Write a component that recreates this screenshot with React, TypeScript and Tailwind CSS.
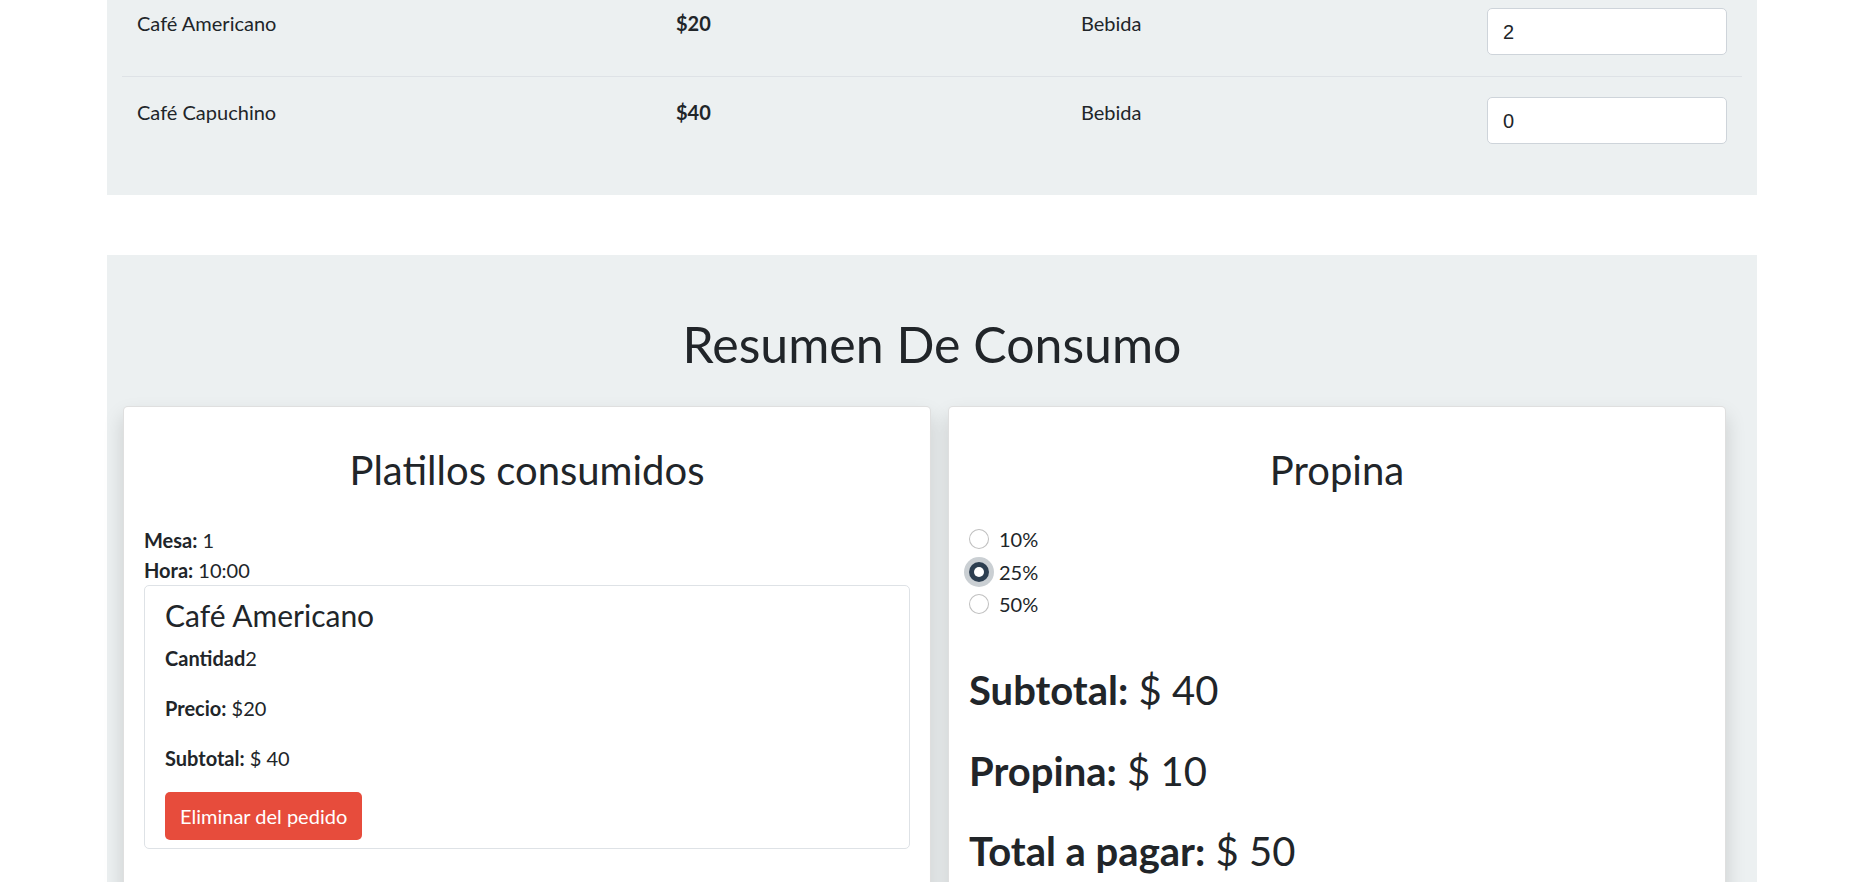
const productos = [
  { nombre: "Café Americano", precio: 20, tipo: "Bebida", cantidad: 2 },
  { nombre: "Café Capuchino", precio: 40, tipo: "Bebida", cantidad: 0 },
]

const propinas = [
  { label: "10%", checked: false },
  { label: "25%", checked: true },
  { label: "50%", checked: false },
]

const Radio = ({ checked }: { checked: boolean }) =>
  checked ? (
    <span className="mt-[5px] flex h-[20px] w-[20px] shrink-0 items-center justify-center rounded-full bg-[#2c3e50] shadow-[0_0_0_5px_rgba(44,62,80,0.25)]">
      <span className="h-[10px] w-[10px] rounded-full bg-white"></span>
    </span>
  ) : (
    <span className="mt-[5px] block h-[20px] w-[20px] shrink-0 rounded-full border border-[rgba(0,0,0,0.25)] bg-white"></span>
  )

export default function App() {
  return (
    <div className="min-h-screen bg-white font-['Lato',sans-serif] text-[20px] leading-[30px] text-[#212529] overflow-hidden">
      {/* Menu table */}
      <section className="ml-[107px] flex w-[1650px] flex-col bg-[#ecf0f1] px-[15px] pb-[30px]">
        <div className="-mt-[12px]">
          {productos.map((p, i) => (
            <div
              key={p.nombre}
              className={`grid grid-cols-[539px_405px_406px_270px] ${i === 0 ? "border-b border-[#dee2e6]" : ""}`}
            >
              <div className="px-[15px] pt-[20px] pb-[21px]">{p.nombre}</div>
              <div className="px-[15px] pt-[20px] pb-[21px] font-bold">${p.precio}</div>
              <div className="px-[15px] pt-[20px] pb-[21px]">{p.tipo}</div>
              <div className="px-[15px] pt-[20px] pb-[21px]">
                <div className="flex h-[47px] w-[240px] items-center rounded-[5px] border border-[#ced4da] bg-white px-[15px] font-['Liberation_Sans',sans-serif] text-[20px] text-[#212529]">
                  {p.cantidad}
                </div>
              </div>
            </div>
          ))}
        </div>
      </section>

      {/* Resumen */}
      <section className="ml-[107px] mt-[60px] w-[1650px] bg-[#ecf0f1] pt-[59px] pb-[40px]">
        <h1 className="text-center text-[50px] font-normal leading-[60px]">Resumen De Consumo</h1>

        <div className="mt-[32px] flex gap-[17px] pl-[16px]">
          <div className="w-[808px] rounded-[5px] border border-[rgba(0,0,0,0.125)] bg-white px-[20px] pt-[39px] pb-[20px] shadow-[0_10px_20px_rgba(0,0,0,0.15)]">
            <h2 className="text-center text-[40px] font-normal leading-[48px]">Platillos consumidos</h2>
            <div className="mt-[31px]">
              <p><b>Mesa:</b> 1</p>
              <p><b>Hora:</b> 10:00</p>
            </div>
            <div className="rounded-[5px] border border-[#dee2e6] px-[20px] pt-[11px] pb-[8px]">
              <h4 className="mb-[10px] text-[30px] font-normal leading-[36px]">Café Americano</h4>
              <p className="mb-[20px]"><b>Cantidad</b>2</p>
              <p className="mb-[20px]"><b>Precio:</b> $20</p>
              <p className="mb-[19px]"><b>Subtotal:</b> $ 40</p>
              <button className="h-[48px] rounded-[5px] bg-[#e74c3c] px-[15px] text-[20px] text-white">
                Eliminar del pedido
              </button>
            </div>
          </div>

          <div className="w-[778px] rounded-[5px] border border-[rgba(0,0,0,0.125)] bg-white px-[20px] pt-[39px] pb-[20px] shadow-[0_10px_20px_rgba(0,0,0,0.15)]">
            <h2 className="text-center text-[40px] font-normal leading-[48px]">Propina</h2>
            <div className="mt-[30px] flex flex-col gap-[2.5px]">
              {propinas.map((op) => (
                <label key={op.label} className="flex gap-[10px]">
                  <Radio checked={op.checked} />
                  <span>{op.label}</span>
                </label>
              ))}
            </div>
            <div className="mt-[47px] flex flex-col gap-[32.5px]">
              <h2 className="text-[40px] font-normal leading-[48px]"><b>Subtotal:</b> $ 40</h2>
              <h2 className="text-[40px] font-normal leading-[48px]"><b>Propina:</b> $ 10</h2>
              <h2 className="text-[40px] font-normal leading-[48px]"><b>Total a pagar:</b> $ 50</h2>
            </div>
          </div>
        </div>
      </section>
    </div>
  )
}
